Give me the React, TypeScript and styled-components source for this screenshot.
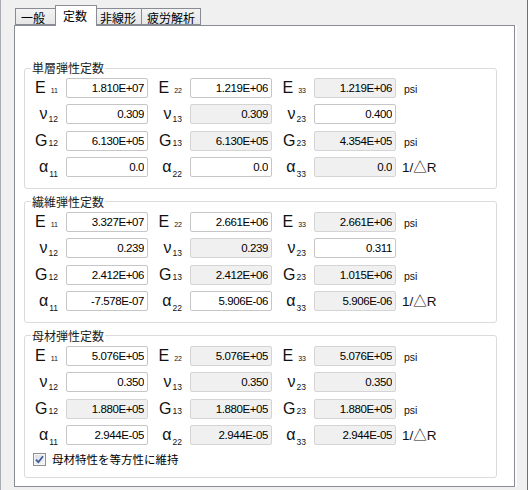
import styled, { createGlobalStyle } from "styled-components";

type SymKind = "E" | "nu" | "G" | "alpha";

interface RowData {
  kind: SymKind;
  subs: string[];
  values: string[];
  locked: boolean[];
  unit?: string;
}

interface GroupData {
  title: string;
  rows: RowData[];
  hasCheckbox?: boolean;
}

const SYMBOLS: Record<SymKind, string> = {
  E: "E",
  nu: "ν",
  G: "G",
  alpha: "α",
};

const makeRows = (
  values: string[][],
  locked: boolean[][]
): RowData[] => [
  { kind: "E", subs: ["11", "22", "33"], values: values[0], locked: locked[0], unit: "psi" },
  { kind: "nu", subs: ["12", "13", "23"], values: values[1], locked: locked[1] },
  { kind: "G", subs: ["12", "13", "23"], values: values[2], locked: locked[2], unit: "psi" },
  { kind: "alpha", subs: ["11", "22", "33"], values: values[3], locked: locked[3], unit: "1/△R" },
];

const GROUPS: GroupData[] = [
  {
    title: "単層弾性定数",
    rows: makeRows(
      [
        ["1.810E+07", "1.219E+06", "1.219E+06"],
        ["0.309", "0.309", "0.400"],
        ["6.130E+05", "6.130E+05", "4.354E+05"],
        ["0.0", "0.0", "0.0"],
      ],
      [
        [false, false, true],
        [false, true, false],
        [false, true, true],
        [false, false, true],
      ]
    ),
  },
  {
    title: "繊維弾性定数",
    rows: makeRows(
      [
        ["3.327E+07", "2.661E+06", "2.661E+06"],
        ["0.239", "0.239", "0.311"],
        ["2.412E+06", "2.412E+06", "1.015E+06"],
        ["-7.578E-07", "5.906E-06", "5.906E-06"],
      ],
      [
        [false, false, true],
        [false, true, false],
        [false, true, true],
        [false, false, true],
      ]
    ),
  },
  {
    title: "母材弾性定数",
    hasCheckbox: true,
    rows: makeRows(
      [
        ["5.076E+05", "5.076E+05", "5.076E+05"],
        ["0.350", "0.350", "0.350"],
        ["1.880E+05", "1.880E+05", "1.880E+05"],
        ["2.944E-05", "2.944E-05", "2.944E-05"],
      ],
      [
        [false, true, true],
        [false, true, true],
        [true, true, true],
        [false, true, true],
      ]
    ),
  },
];

const TABS = ["一般", "定数", "非線形", "疲労解析"];

export default function App() {
  return (
    <>
      <GlobalStyle />
      <Window>
        <TabStrip>
          {TABS.map((tab) => (
            <Tab key={tab} $active={tab === "定数"}>
              {tab}
            </Tab>
          ))}
        </TabStrip>
        <Panel>
          {GROUPS.map((group) => (
            <Group key={group.title}>
              <GroupTitle>{group.title}</GroupTitle>
              <Grid>
                {group.rows.map((row) => (
                  <Row key={row.kind}>
                    {row.subs.map((sub, i) => (
                      <Cell key={sub}>
                        <Label>
                          <Sym>{SYMBOLS[row.kind]}</Sym>
                          <Sub $kind={row.kind}>{sub}</Sub>
                        </Label>
                        <ValueInput
                          defaultValue={row.values[i]}
                          readOnly={row.locked[i]}
                          $locked={row.locked[i]}
                        />
                      </Cell>
                    ))}
                    <Unit $big={row.unit === "1/△R"}>{row.unit}</Unit>
                  </Row>
                ))}
              </Grid>
              {group.hasCheckbox && (
                <CheckRow>
                  <CheckBox>
                    <svg width="9" height="9" viewBox="0 0 9 9">
                      <path
                        d="M1 4.6 L3.4 7.2 L8 1.2"
                        fill="none"
                        stroke="#3c5a9a"
                        strokeWidth="1.8"
                      />
                    </svg>
                  </CheckBox>
                  <CheckText>母材特性を等方性に維持</CheckText>
                </CheckRow>
              )}
            </Group>
          ))}
        </Panel>
      </Window>
    </>
  );
}

const GlobalStyle = createGlobalStyle`
  html, body {
    margin: 0;
    padding: 0;
    background: #f0f0f0;
  }
  * {
    box-sizing: border-box;
  }
`;

const Window = styled.div`
  width: 528px;
  height: 490px;
  display: flex;
  flex-direction: column;
  padding: 5px 12px 5px 13px;
  background: #f0f0f0;
  border-left: 1px solid #a9acb2;
  border-right: 1px solid #6d7078;
  font-family: "Noto Sans CJK JP", "Liberation Sans", sans-serif;
`;

const TabStrip = styled.div`
  display: flex;
  align-items: flex-end;
  height: 20px;
  padding-left: 1px;
`;

const Tab = styled.div<{ $active: boolean }>`
  position: relative;
  min-width: 42px;
  height: ${(p) => (p.$active ? "21px" : "17px")};
  margin: ${(p) => (p.$active ? "0 -2px -1px -2px" : "0 0 0 -1px")};
  padding: ${(p) => (p.$active ? "3px 5px 0 7px" : "2px 5px 0 5px")};
  z-index: ${(p) => (p.$active ? 1 : 0)};
  border: 1px solid #898c95;
  border-bottom: ${(p) => (p.$active ? "none" : "1px solid #898c95")};
  background: ${(p) =>
    p.$active ? "#ffffff" : "linear-gradient(#f3f3f3, #e6e6e6)"};
  font-size: 12px;
  line-height: 14px;
  color: #000;
  white-space: nowrap;

  &:first-child {
    margin-left: 0;
  }
`;

const Panel = styled.div`
  flex: 1;
  display: flex;
  flex-direction: column;
  gap: 6px;
  padding: 35px 17px 8px 9px;
  background: #ffffff;
  border: 1px solid #898c95;
  box-shadow: 2px 0 0 #fbfbfb;
`;

const Group = styled.fieldset`
  margin: 0;
  min-inline-size: 0;
  padding: 3px 0 11px 0;
  border: 1px solid #d9dbdd;
  border-radius: 3px;
`;

const GroupTitle = styled.legend`
  margin-left: 6px;
  padding: 0 1px;
  font-size: 12px;
  line-height: 14px;
  color: #1a1a1a;
`;

const Grid = styled.div`
  display: flex;
  flex-direction: column;
  gap: 6.33px;
`;

const Row = styled.div`
  display: flex;
  align-items: center;
  height: 20px;
`;

const Cell = styled.div`
  display: flex;
  align-items: center;
  &:first-child {
    margin-left: -1px;
  }
`;

const Label = styled.div`
  width: 42px;
  height: 20px;
  padding-right: 8px;
  display: flex;
  justify-content: flex-end;
  align-items: baseline;
  font-family: "Liberation Sans", Arial, sans-serif;
  line-height: 20px;
  color: #111;
`;

const Sym = styled.span`
  font-size: 16px;
`;

const Sub = styled.span<{ $kind: SymKind }>`
  margin-left: ${(p) => (p.$kind === "E" ? "5px" : "1px")};
  font-size: ${(p) => (p.$kind === "E" ? "7px" : "8.5px")};
  position: relative;
  top: ${(p) =>
    p.$kind === "alpha" ? "5px" : p.$kind === "nu" ? "3px" : "0"};
`;

const ValueInput = styled.input<{ $locked: boolean }>`
  width: 82px;
  height: 20px;
  padding: 0 3px 0 2px;
  border: 1px solid ${(p) => (p.$locked ? "#d4d4d4" : "#c6c6c6")};
  border-radius: 2px;
  background: ${(p) => (p.$locked ? "#f0f0f0" : "#ffffff")};
  font-family: "Liberation Sans", Arial, sans-serif;
  font-size: 11.5px;
  letter-spacing: -0.4px;
  color: #000;
  text-align: right;
  outline: none;
`;

const Unit = styled.span<{ $big: boolean }>`
  padding-left: ${(p) => (p.$big ? "6px" : "8px")};
  font-family: "Liberation Sans", "Noto Sans CJK JP", sans-serif;
  font-size: ${(p) => (p.$big ? "13.5px" : "10.5px")};
  line-height: 20px;
  padding-top: ${(p) => (p.$big ? "3px" : "2px")};
  color: #111;
  white-space: nowrap;
`;

const CheckRow = styled.div`
  display: flex;
  align-items: center;
  gap: 6px;
  margin-top: 8px;
  padding-left: 8px;
  height: 13px;
`;

const CheckBox = styled.span`
  width: 13px;
  height: 13px;
  display: flex;
  align-items: center;
  justify-content: center;
  border: 1px solid #8f8f8f;
  background: linear-gradient(135deg, #d9dde4, #f4f6f8);
  box-shadow: inset 0 0 0 1px #f6f6f6;
`;

const CheckText = styled.span`
  font-size: 11.5px;
  line-height: 13px;
  color: #000;
`;
